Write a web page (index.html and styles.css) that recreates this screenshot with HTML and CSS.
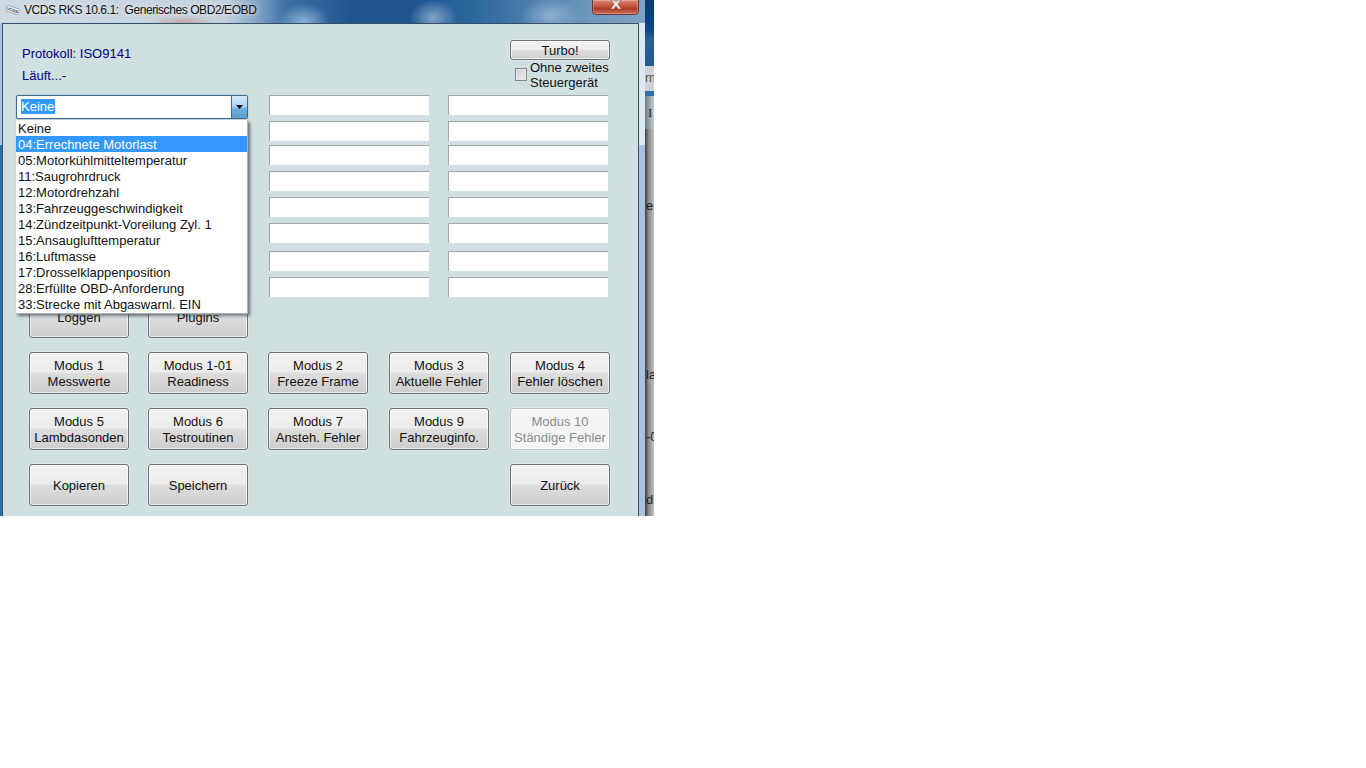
FILE: index.html
```html
<!DOCTYPE html>
<html lang="de">
<head>
<meta charset="utf-8">
<title>VCDS RKS 10.6.1</title>
<link rel="stylesheet" href="styles.css">
</head>
<body>
<div class="shot">
  <div class="window">
    <div class="titlebar">
      <svg class="app-icon" width="15" height="12" viewBox="0 0 15 12"><g transform="rotate(18 7.5 6)"><rect x="1" y="3" width="13" height="6" rx="1.5" fill="#eef2f6" stroke="#8b97a6" stroke-width=".7"/><text x="7.5" y="7.6" font-size="4.2" font-weight="700" text-anchor="middle" fill="#33415a" font-family="Liberation Sans, sans-serif">VCDS</text></g></svg>
      <span class="title-text">VCDS RKS 10.6.1:&nbsp; Generisches OBD2/EOBD</span>
      <div class="close-btn"><svg width="12" height="9" viewBox="0 0 12 9"><path d="M1 0h3l2 2.2L8 0h3L7.8 4 11.4 9H8.2L6 6 3.8 9H.6l3.6-5z" fill="#f6f2f0" stroke="#6b3a34" stroke-width=".5"/></svg></div>
    </div>
    <div class="client">
      <header class="top">
        <div class="status">
          <div class="status-line">Protokoll: ISO9141</div>
          <div class="status-line">Läuft...-</div>
        </div>
        <div class="turbo-box">
          <button class="btn btn-turbo">Turbo!</button>
          <div class="check-row">
            <span class="checkbox"></span>
            <span class="check-label">Ohne zweites<br>Steuergerät</span>
          </div>
        </div>
      </header>

      <section class="fields">
        <div class="combo-wrap">
          <div class="combo">
            <span class="combo-value"><span class="sel">Keine</span></span>
            <span class="combo-arrow"><svg width="7" height="4" viewBox="0 0 7 4"><path d="M0 0h7L3.5 4z" fill="#111"/></svg></span>
          </div>
          <ul class="list">
            <li>Keine</li>
            <li class="active">04:Errechnete Motorlast</li>
            <li>05:Motorkühlmitteltemperatur</li>
            <li>11:Saugrohrdruck</li>
            <li>12:Motordrehzahl</li>
            <li>13:Fahrzeuggeschwindigkeit</li>
            <li>14:Zündzeitpunkt-Voreilung Zyl. 1</li>
            <li>15:Ansauglufttemperatur</li>
            <li>16:Luftmasse</li>
            <li>17:Drosselklappenposition</li>
            <li>28:Erfüllte OBD-Anforderung</li>
            <li>33:Strecke mit Abgaswarnl. EIN</li>
          </ul>
        </div>
        <div class="field c2"></div><div class="field"></div>
        <div class="field c2"></div><div class="field"></div>
        <div class="field c2"></div><div class="field"></div>
        <div class="field c2"></div><div class="field"></div>
        <div class="field c2"></div><div class="field"></div>
        <div class="field c2"></div><div class="field"></div>
        <div class="field c2"></div><div class="field"></div>
        <div class="field c2"></div><div class="field"></div>
      </section>

      <section class="buttons">
        <button class="btn">Loggen</button>
        <button class="btn">Plugins</button>
        <span class="gap-3"></span>
        <button class="btn">Modus 1<br>Messwerte</button>
        <button class="btn">Modus 1-01<br>Readiness</button>
        <button class="btn">Modus 2<br>Freeze Frame</button>
        <button class="btn">Modus 3<br>Aktuelle Fehler</button>
        <button class="btn">Modus 4<br>Fehler löschen</button>
        <button class="btn">Modus 5<br>Lambdasonden</button>
        <button class="btn">Modus 6<br>Testroutinen</button>
        <button class="btn">Modus 7<br>Ansteh. Fehler</button>
        <button class="btn">Modus 9<br>Fahrzeuginfo.</button>
        <button class="btn btn-off">Modus 10<br>Ständige Fehler</button>
        <button class="btn">Kopieren</button>
        <button class="btn">Speichern</button>
        <span class="gap-2"></span>
        <button class="btn">Zurück</button>
      </section>
    </div>
  </div>
  <aside class="behind">
    <div class="b-dark"></div>
    <div class="b-tab">m</div>
    <div class="b-line"></div>
    <div class="b-menu">I</div>
    <div class="b-pane">
      <div class="frag f1">e</div>
      <div class="frag f2">la</div>
      <div class="frag f3">-0</div>
      <div class="frag f4">d</div>
    </div>
  </aside>
</div>
</body>
</html>
```
FILE: styles.css
```css
* { box-sizing: border-box; }
html, body { margin: 0; padding: 0; background: #fff; }
body { font-family: "Liberation Sans", Arial, sans-serif; font-size: 13px; color: #111; }

.shot { display: flex; width: 654px; height: 516px; overflow: hidden; }

.window {
  width: 645px; height: 516px; display: flex; flex-direction: column;
  background:
    linear-gradient(180deg, rgba(255,255,255,.6) 0, rgba(255,255,255,.6) 145px, rgba(255,255,255,0) 145px),
    linear-gradient(90deg, #2f6da8 0, #2f6da8 3px, #a7c3de 3px, #a7c3de 100%);
}
.titlebar {
  position: relative; height: 23px; flex: none; display: flex; align-items: center; padding: 0 0 3px 5px;
  background:
    radial-gradient(ellipse 34px 10px at 183px 25px, rgba(190,90,80,.5), transparent),
    radial-gradient(ellipse 26px 18px at 304px 22px, rgba(190,215,235,.65), transparent),
    radial-gradient(ellipse 24px 18px at 433px 18px, rgba(190,215,235,.6), transparent),
    radial-gradient(ellipse 30px 18px at 550px 16px, rgba(195,218,235,.5), transparent),
    linear-gradient(90deg, #cfd9e2 0, #c3d1dd 225px, #7fa3c4 258px, #3e72a7 285px, #1f5690 354px, #1f5690 416px, #2f699f 480px, #6f97bc 590px, #7ea3c4 645px);
}
.app-icon { flex: none; margin-right: 4px; }
.title-text { color: #111; font-size: 12px; line-height: 16px; letter-spacing: -.42px; text-shadow: 0 0 5px rgba(255,255,255,.9); }
.close-btn {
  position: absolute; left: 592px; top: -1px; width: 47px; height: 16px; display: flex; align-items: flex-start; justify-content: center;
  border: 1px solid #5b3a3a; border-radius: 0 0 4px 4px;
  background: linear-gradient(180deg, #d9897b 0, #c4533c 45%, #ad3c28 60%, #d06a52 100%);
  box-shadow: inset 0 0 0 1px rgba(255,255,255,.25);
}

.client {
  width: 637px; margin-left: 2px; flex: 1; min-height: 0; padding: 16px 0 0 13px;
  background: #d0dfdf; border: 1px solid #36506a; border-bottom: 0;
}

.top { display: flex; justify-content: space-between; height: 55px; }
.status { padding: 6px 0 0 6px; }
.status-line { color: #000080; line-height: 16px; margin-bottom: 6px; }
.turbo-box { width: 104px; margin-right: 24px; }
.btn-turbo { height: 20px; display: block; }
.check-row { display: flex; align-items: flex-start; padding-left: 5px; height: 30px; overflow: hidden; }
.checkbox {
  flex: none; width: 12px; height: 13px; margin: 8px 3px 0 0; border: 1px solid #7f888c;
  background: linear-gradient(135deg, #cfcfcf, #ececec); box-shadow: inset 0 0 0 1px #e4e8e8;
}
.check-label { line-height: 15px; white-space: nowrap; }

.fields {
  display: grid; grid-template-columns: 253px 179px 160px;
  grid-template-rows: 26px 24px 26px 26px 26px 28px 26px 19px;
}
.combo-wrap { position: relative; grid-row: 1; grid-column: 1; width: 232px; height: 24px; z-index: 2; }
.combo {
  display: flex; height: 24px; background: #fff; border: 1px solid #3f6c8c; border-radius: 2px;
  box-shadow: 0 0 1px rgba(40,90,130,.5);
}
.combo-value { flex: 1; padding: 3px 0 0 4px; line-height: 16px; }
.sel { background: #3399ff; color: #fff; display: inline-block; line-height: 15px; padding-right: 1px; }
.combo-arrow {
  flex: none; width: 16px; display: flex; align-items: center; justify-content: center;
  background: linear-gradient(180deg, #d3e9f8 0, #a9d3ef 50%, #6fb0dc 55%, #5f9fcd 100%);
  border-left: 1px solid #3f6c8c;
}
.list {
  position: absolute; left: 0; top: 25px; width: 232px; margin: 0; padding: 0 0 1px; list-style: none;
  background: #fff; border: solid #a9b2b6; border-width: 0 1px 1px 0;
  box-shadow: 2px 2px 3px rgba(40,50,60,.65);
}
.list li { height: 16px; line-height: 16px; padding: 1px 0 0 2px; color: #111; white-space: nowrap; }
.list .active { background: #3399ff; color: #fff; }

.field { width: 160px; height: 20px; background: #fff; border: solid #a3a7a7; border-width: 1px 0 0 1px; }
.c2 { grid-column: 2; }

.buttons {
  display: grid; grid-template-columns: 119px 120px 121px 121px 100px; grid-auto-rows: 42px; row-gap: 14px;
  padding-left: 13px;
}
.gap-3 { grid-column: span 3; }
.gap-2 { grid-column: span 2; }
.btn {
  width: 100px; padding: 2px 0 0; font: 13px/16px "Liberation Sans", Arial, sans-serif; color: #111; text-align: center;
  border: 1px solid #6e7274; border-radius: 3px;
  background: linear-gradient(180deg, #f3f3f3 0, #ececec 48%, #dedede 50%, #cdcdcd 100%);
  box-shadow: inset 0 0 0 1px rgba(255,255,255,.65), 0 0 0 1px rgba(255,255,255,.3);
}
.btn-off { color: #8d8d8d; border-color: #bcc2c2; background: #f4f4f4; }

.behind { width: 9px; height: 516px; display: flex; flex-direction: column; overflow: hidden; color: #222; line-height: 16px; }
.b-dark { height: 66px; flex: none; background: linear-gradient(180deg, #0a3a75 0, #0c4589 45%, #2d5f8c 60%, #1f5a94 100%); }
.b-tab { height: 25px; flex: none; padding-top: 4px; background: #cdd3d8; color: #555; }
.b-line { height: 5px; flex: none; background: #2c6ea8; }
.b-menu { height: 33px; flex: none; padding: 9px 0 0 3px; font-family: "Liberation Serif", serif; background: linear-gradient(90deg, #6d7a85, #c4ccd3); }
.b-pane { flex: 1; background: linear-gradient(90deg, #3b3b3b 0, #8c8c8c 40%, #c0c0c0 100%); }
.frag { height: 16px; padding-left: 1px; white-space: nowrap; }
.f1 { margin-top: 69px; }
.f2 { margin-top: 153px; }
.f3 { margin-top: 46px; }
.f4 { margin-top: 47px; }
```
